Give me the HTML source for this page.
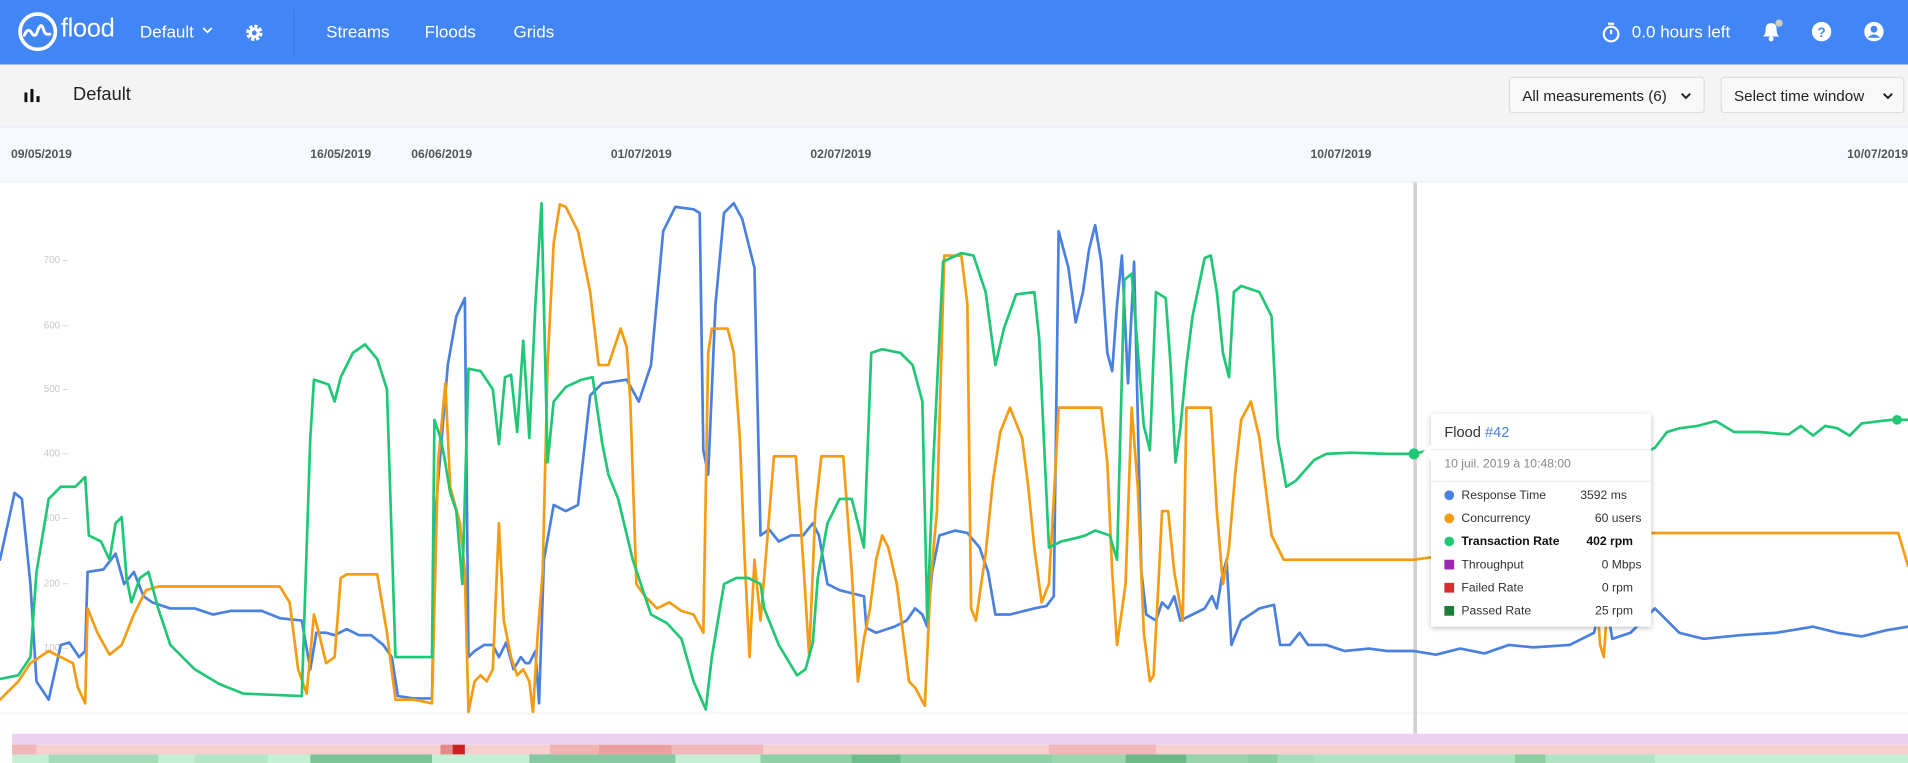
<!DOCTYPE html>
<html><head><meta charset="utf-8"><style>
html,body{margin:0;padding:0;width:1908px;height:763px;overflow:hidden;background:#fff;font-family:"Liberation Sans","DejaVu Sans",sans-serif}
#w{position:absolute;left:0;top:0;width:1568px;height:627px;transform:scale(1.21684);transform-origin:0 0;overflow:hidden}
.hdr{position:absolute;left:0;top:0;width:1568px;height:53px;background:#4285f4;box-shadow:0 1px 3px rgba(0,0,0,.25);color:#fff}
.hdr .t{position:absolute;top:18px;font-size:14px;color:#fff}
.sub{position:absolute;left:0;top:53px;width:1568px;height:51px;background:#f4f4f4}
.btn{position:absolute;top:10px;height:30px;border:1px solid #ddd;border-radius:3px;background:#f8f8f8;font-size:12.5px;color:#222;line-height:30px;box-sizing:border-box;padding-left:10px}
.dates{position:absolute;left:0;top:104px;width:1568px;height:46px;background:#f5f8fc;border-top:1px solid #e8eef6;border-bottom:1px solid #e8eef6;box-sizing:border-box}
.dates span{position:absolute;top:17px;font-size:10px;font-weight:bold;color:#555}
.yl{position:absolute;left:36px;font-size:8px;color:#c8c8c8}
.tip{position:absolute;left:1176px;top:340px;width:181px;height:175px;background:#fff;box-shadow:0 1px 4px rgba(0,0,0,.25);font-size:10px;color:#333}
.tip .r{position:absolute;left:11px;height:14px;line-height:14px}
.tip .v{position:absolute;left:0;width:170px;text-align:right}
.dot{display:inline-block;width:8px;height:8px;border-radius:50%;margin-right:6px;vertical-align:-1px}
.sq{display:inline-block;width:8px;height:8px;margin-right:6px;vertical-align:-1px}
</style></head><body><div id="w">
<div class="hdr">
<svg style="position:absolute;left:14px;top:9px" width="34" height="34" viewBox="0 0 34 34"><circle cx="17" cy="17" r="14.5" fill="none" stroke="#fff" stroke-width="3"/><path d="M6 20 Q9 13 12 18 T17 16 Q20 8 22 16 Q23 20 27 19" fill="none" stroke="#fff" stroke-width="2.4" stroke-linecap="round"/></svg>
<div class="t" style="left:50px;top:12px;font-size:21px;letter-spacing:-0.3px">flood</div>
<div class="t" style="left:115px">Default</div>
<svg style="position:absolute;left:166px;top:22px" width="9" height="6" viewBox="0 0 9 6"><path d="M1 1l3.5 3.5L8 1" stroke="#fff" stroke-width="1.5" fill="none"/></svg>
<svg style="position:absolute;left:201px;top:19px" width="16" height="16" viewBox="0 0 16 16"><circle cx="8" cy="8" r="5" fill="none" stroke="#fff" stroke-width="3.5" stroke-dasharray="2.5 1.4"/><circle cx="8" cy="8" r="4.5" fill="#fff"/><circle cx="8" cy="8" r="2" fill="#4285f4"/></svg>
<div style="position:absolute;left:241px;top:8px;width:1px;height:38px;background:#3a78e0"></div>
<div class="t" style="left:268px">Streams</div>
<div class="t" style="left:349px">Floods</div>
<div class="t" style="left:422px">Grids</div>
<svg style="position:absolute;left:1316px;top:18px" width="16" height="17" viewBox="0 0 16 17"><circle cx="8" cy="10" r="6" fill="none" stroke="#fff" stroke-width="1.8"/><path d="M5.5 1.5h5M8 10V6.5" stroke="#fff" stroke-width="1.8"/></svg>
<div class="t" style="left:1341px">0.0 hours left</div>
<svg style="position:absolute;left:1446px;top:16px" width="22" height="20" viewBox="0 0 22 20"><path d="M3 14 Q5 12 5 8 Q5 3 9.5 3 Q14 3 14 8 Q14 12 16 14Z" fill="#fff"/><circle cx="9.5" cy="16" r="2" fill="#fff"/><circle cx="16" cy="3" r="3" fill="#ccc"/></svg>
<svg style="position:absolute;left:1489px;top:18px" width="16" height="16" viewBox="0 0 16 16"><circle cx="8" cy="8" r="8" fill="#fff"/><text x="8" y="12.5" text-anchor="middle" font-size="11" font-weight="bold" fill="#4285f4" font-family="Liberation Sans">?</text></svg>
<svg style="position:absolute;left:1532px;top:18px" width="16" height="16" viewBox="0 0 16 16"><circle cx="8" cy="8" r="8" fill="#fff"/><circle cx="8" cy="6" r="2.8" fill="#4285f4"/><path d="M3 13 Q8 7.5 13 13" fill="#4285f4"/></svg>
</div>
<div class="sub">
<svg style="position:absolute;left:20px;top:20px" width="13" height="11" viewBox="0 0 13 11"><rect x="0" y="3" width="2.5" height="8" fill="#111"/><rect x="5" y="0" width="2.5" height="11" fill="#111"/><rect x="10" y="6" width="2.5" height="5" fill="#111"/></svg>
<div style="position:absolute;left:60px;top:16px;font-size:15px;color:#222">Default</div>
<div class="btn" style="left:1240px;width:161px">All measurements (6)<svg style="position:absolute;right:10px;top:12px" width="9" height="6" viewBox="0 0 9 6"><path d="M1 1l3.5 3.5L8 1" stroke="#222" stroke-width="1.6" fill="none"/></svg></div>
<div class="btn" style="left:1414px;width:151px">Select time window<svg style="position:absolute;right:8px;top:12px" width="9" height="6" viewBox="0 0 9 6"><path d="M1 1l3.5 3.5L8 1" stroke="#222" stroke-width="1.6" fill="none"/></svg></div>
</div>
<div class="dates">
<span style="left:9px">09/05/2019</span><span style="left:255px">16/05/2019</span><span style="left:338px">06/06/2019</span><span style="left:502px">01/07/2019</span><span style="left:666px">02/07/2019</span><span style="left:1077px">10/07/2019</span><span style="left:1518px">10/07/2019</span>
</div>
<div class="yl" style="top:209px">700 –</div><div class="yl" style="top:263px">600 –</div><div class="yl" style="top:315px">500 –</div><div class="yl" style="top:368px">400 –</div><div class="yl" style="top:421px">300 –</div><div class="yl" style="top:475px">200 –</div><div class="yl" style="top:528px">100 –</div>
<svg style="position:absolute;left:0;top:0" width="1568" height="627">
<line x1="0" y1="586" x2="1568" y2="586" stroke="#f0f0f0"/>
<line x1="1163" y1="150" x2="1163" y2="603" stroke="#d0d0d0" stroke-width="3"/>
<g fill="none" stroke-width="2.2" stroke-linejoin="round" stroke-linecap="round">
<polyline stroke="#4a80e0" points="0,460 12,405 18,410 25,480 30,560 40,575 50,530 57,528 65,540 70,535 72,470 85,468 95,455 102,480 110,470 118,490 125,495 140,500 160,500 175,505 190,502 215,502 230,508 248,510 255,550 260,520 268,520 275,522 285,517 295,522 305,522 315,530 322,540 327,572 340,574 355,574 358,420 368,300 375,260 382,245 385,540 390,535 398,530 405,530 410,540 416,528 422,550 428,540 432,545 435,545 440,535 443,578 447,460 455,415 465,420 475,415 485,325 495,315 515,312 525,330 535,300 545,190 555,170 570,172 575,175 578,370 582,390 588,250 595,175 603,167 610,180 620,220 625,440 632,435 640,445 650,440 660,440 668,430 673,440 680,480 690,485 710,490 712,516 720,520 735,515 745,510 752,500 758,505 762,515 766,470 772,440 785,436 795,438 805,450 812,470 818,505 830,505 850,500 860,498 866,490 870,190 878,220 884,265 890,240 895,205 900,185 905,215 910,290 914,305 918,250 922,210 927,315 932,215 938,470 942,505 950,510 955,495 960,500 965,490 970,510 980,505 990,500 996,490 1000,500 1004,475 1008,460 1012,530 1020,510 1035,500 1047,497 1052,530 1060,530 1068,520 1075,530 1090,530 1105,535 1125,533 1140,535 1162,535 1180,538 1200,533 1220,537 1240,530 1260,532 1290,530 1310,520 1318,485 1325,525 1340,520 1350,510 1360,500 1370,510 1380,520 1400,525 1430,522 1460,520 1490,515 1510,520 1530,523 1550,518 1568,515"/>
<polyline stroke="#f59c12" points="0,575 15,560 25,545 40,535 50,540 60,545 64,565 70,578 72,500 80,520 90,538 100,530 110,505 120,485 130,482 230,482 238,495 245,550 252,570 258,505 262,520 268,545 275,540 280,475 285,472 310,472 318,520 325,575 340,575 355,578 360,380 366,315 370,400 378,430 382,470 385,585 390,560 395,555 400,560 405,550 410,430 414,510 420,540 425,555 430,550 435,560 438,585 442,520 446,470 450,300 455,200 460,168 465,170 475,190 485,240 492,300 500,300 510,270 515,285 518,330 523,480 530,490 540,500 550,495 560,502 570,505 578,520 582,290 585,270 598,270 603,290 608,360 612,460 616,540 620,460 625,510 630,450 636,375 654,375 660,460 665,540 670,420 675,375 693,375 700,470 705,560 710,525 715,500 720,460 725,440 730,450 737,480 742,520 747,560 752,565 760,580 765,475 770,420 776,210 790,210 795,250 798,500 802,510 810,455 816,395 822,355 830,335 840,360 845,400 850,450 856,495 862,480 866,410 870,335 905,335 910,380 914,470 918,530 925,480 930,335 935,400 940,520 945,560 948,555 952,480 955,420 960,420 965,470 972,510 975,335 995,335 1000,420 1005,480 1010,450 1015,390 1020,345 1028,330 1035,360 1040,400 1045,440 1055,460 1070,460 1162,460 1176,458 1310,460 1315,530 1318,540 1325,438 1330,438 1560,438 1568,465"/>
<polyline stroke="#1fc776" points="0,558 15,555 25,540 30,470 40,410 50,400 62,400 70,392 73,440 83,445 90,460 95,430 100,425 104,475 108,495 115,475 122,470 130,500 140,530 160,550 180,562 200,570 248,572 255,360 258,312 270,316 275,330 280,310 290,290 300,283 310,295 318,320 325,540 340,540 355,540 357,345 362,360 365,375 370,405 375,420 380,480 385,303 395,305 405,320 410,365 415,310 420,308 425,355 430,280 435,360 440,250 445,167 450,380 455,330 465,318 478,312 487,310 495,365 500,390 508,410 520,460 535,505 548,512 560,525 570,560 580,583 585,540 595,480 605,475 615,475 625,480 628,500 640,530 655,555 662,550 668,528 672,475 680,430 690,410 700,410 710,450 716,290 725,287 740,290 750,300 758,330 762,510 767,380 775,215 790,208 800,210 810,240 818,300 825,270 835,242 850,240 854,278 862,450 872,445 885,442 892,440 900,436 912,440 918,460 924,230 930,225 940,350 945,370 950,240 958,245 962,300 966,380 970,352 975,300 980,260 990,212 995,210 1000,240 1005,290 1010,310 1014,240 1020,235 1035,240 1045,260 1050,360 1057,400 1065,395 1080,378 1090,373 1110,372 1140,373 1162,373 1175,370 1190,372 1210,374 1240,376 1270,372 1300,374 1320,360 1325,342 1330,375 1345,375 1360,368 1370,355 1380,352 1395,350 1410,346 1425,355 1445,355 1470,357 1480,350 1490,358 1500,350 1510,352 1520,358 1530,348 1545,346 1555,345 1568,345"/>
</g>
<circle cx="1162" cy="373" r="4.5" fill="#1fc776"/><circle cx="1559" cy="345" r="4" fill="#1fc776"/>
<rect x="10" y="603" width="1558" height="9" fill="#ecd2f0"/>
<rect x="10" y="612" width="1558" height="8" fill="#f6cfcf"/>
<rect x="10" y="612" width="20" height="8" fill="#efb8b8"/><rect x="362" y="612" width="10" height="8" fill="#e58a8a"/><rect x="372" y="612" width="10" height="8" fill="#cc2222"/><rect x="452" y="612" width="40" height="8" fill="#efb3b3"/><rect x="492" y="612" width="60" height="8" fill="#eaa0a0"/><rect x="552" y="612" width="75" height="8" fill="#f0b8b8"/><rect x="862" y="612" width="88" height="8" fill="#f0b8b8"/>
<rect x="10" y="620" width="1558" height="7" fill="#c6efd4"/>
<rect x="40" y="620" width="90" height="7" fill="#a3dcb6"/><rect x="160" y="620" width="60" height="7" fill="#b3e6c4"/><rect x="255" y="620" width="100" height="7" fill="#7cc496"/><rect x="435" y="620" width="120" height="7" fill="#86c9a0"/><rect x="625" y="620" width="240" height="7" fill="#8fd0a6"/><rect x="700" y="620" width="40" height="7" fill="#6fbd8a"/><rect x="865" y="620" width="60" height="7" fill="#9bd6b0"/><rect x="925" y="620" width="50" height="7" fill="#6db886"/><rect x="975" y="620" width="50" height="7" fill="#96d3aa"/><rect x="1025" y="620" width="25" height="7" fill="#8ccda1"/><rect x="1050" y="620" width="30" height="7" fill="#a8dfba"/><rect x="1080" y="620" width="280" height="7" fill="#b0e3c2"/><rect x="1245" y="620" width="25" height="7" fill="#8ccda1"/>
</svg>
<div class="tip">
<svg style="position:absolute;left:-7px;top:24px" width="8" height="16" viewBox="0 0 8 16"><path d="M8 0L0 8L8 16Z" fill="#fff"/></svg>
<div style="position:absolute;left:11px;top:8px;font-size:12px;color:#333">Flood <span style="color:#4a80e0">#42</span></div>
<div style="position:absolute;left:0;top:29px;width:181px;border-top:1px solid #eee"></div>
<div style="position:absolute;left:11px;top:36px;font-size:10px;color:#888">10 juil. 2019 à 10:48:00</div>
<div style="position:absolute;left:0;top:55px;width:181px;border-top:1px solid #eee"></div>
<div class="r" style="top:61px;width:170px"><span class="dot" style="background:#4a80e0"></span>Response Time<span class="v" style="width:150px">3592 ms</span></div>
<div class="r" style="top:80px;width:170px"><span class="dot" style="background:#f59c12"></span>Concurrency<span class="v" style="width:162px">60 users</span></div>
<div class="r" style="top:99px;width:170px;font-weight:bold;color:#111"><span class="dot" style="background:#1fc776"></span>Transaction Rate<span class="v" style="width:155px">402 rpm</span></div>
<div class="r" style="top:118px;width:170px"><span class="sq" style="background:#9c27b0"></span>Throughput<span class="v" style="width:162px">0 Mbps</span></div>
<div class="r" style="top:137px;width:170px"><span class="sq" style="background:#d32f2f"></span>Failed Rate<span class="v" style="width:155px">0 rpm</span></div>
<div class="r" style="top:156px;width:170px"><span class="sq" style="background:#1b7d36"></span>Passed Rate<span class="v" style="width:155px">25 rpm</span></div>
</div>
</div></body></html>
